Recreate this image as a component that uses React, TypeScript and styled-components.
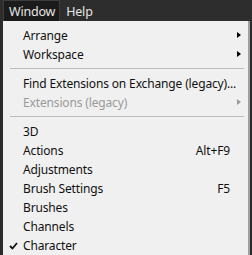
import React from "react";
import styled, { createGlobalStyle } from "styled-components";

const GlobalStyle = createGlobalStyle`
  html, body {
    margin: 0;
    padding: 0;
    background: #2b2b2b;
  }
  body {
    font-family: "Noto Sans", "Open Sans", sans-serif;
    font-size: 12px;
    width: 252px;
    height: 255px;
    overflow: hidden;
  }
`;

const Screen = styled.div`
  width: 252px;
  height: 255px;
  background: #2b2b2b;
  display: flex;
  flex-direction: column;
`;

const MenuBar = styled.div`
  height: 22px;
  display: flex;
  align-items: stretch;
  padding-left: 3px;
  background: #2d2d2d;
`;

const BarItem = styled.div<{ $open?: boolean }>`
  display: flex;
  align-items: center;
  padding: 0 4px 0 5px;
  color: #e6e6e6;
  font-size: 12.5px;
  letter-spacing: -0.2px;
  background: ${(p) => (p.$open ? "#1b1b1b" : "transparent")};
  border: 1px solid ${(p) => (p.$open ? "#3c3c3c" : "transparent")};
  border-bottom: none;
`;

const Dropdown = styled.div`
  margin: 0 2px 0 3px;
  flex: 1;
  background: #f0f0f0;
  border-right: 2px solid #a0a0a0;
  padding-top: 5px;
  display: flex;
  flex-direction: column;
`;

const Item = styled.div<{ $disabled?: boolean }>`
  position: relative;
  height: 19px;
  display: flex;
  align-items: center;
  padding: 0 18px 0 20px;
  letter-spacing: -0.15px;
  color: ${(p) => (p.$disabled ? "#9a9a9a" : "#111")};
`;

const Label = styled.span`
  flex: 1;
  white-space: nowrap;
`;

const Shortcut = styled.span`
  margin-right: 0;
`;

const Arrow = styled.span<{ $dim?: boolean }>`
  position: absolute;
  right: 7px;
  top: 6px;
  width: 0;
  height: 0;
  border-top: 3.5px solid transparent;
  border-bottom: 3.5px solid transparent;
  border-left: 4px solid ${(p) => (p.$dim ? "#9a9a9a" : "#000")};
`;

const Check = styled.svg`
  position: absolute;
  left: 6px;
  top: 6px;
`;

const Separator = styled.div`
  height: 1px;
  margin: 4px 4px 5px 7px;
  background: #bcbcbc;
`;

export default function App() {
  return (
    <Screen>
      <GlobalStyle />
      <MenuBar>
        <BarItem $open>Window</BarItem>
        <BarItem>Help</BarItem>
      </MenuBar>
      <Dropdown>
        <Item>
          <Label>Arrange</Label>
          <Arrow />
        </Item>
        <Item>
          <Label>Workspace</Label>
          <Arrow />
        </Item>
        <Separator />
        <Item>
          <Label>Find Extensions on Exchange (legacy)...</Label>
        </Item>
        <Item $disabled>
          <Label>Extensions (legacy)</Label>
          <Arrow $dim />
        </Item>
        <Separator />
        <Item>
          <Label>3D</Label>
        </Item>
        <Item>
          <Label>Actions</Label>
          <Shortcut>Alt+F9</Shortcut>
        </Item>
        <Item>
          <Label>Adjustments</Label>
        </Item>
        <Item>
          <Label>Brush Settings</Label>
          <Shortcut>F5</Shortcut>
        </Item>
        <Item>
          <Label>Brushes</Label>
        </Item>
        <Item>
          <Label>Channels</Label>
        </Item>
        <Item>
          <Check width="9" height="8" viewBox="0 0 9 8">
            <path d="M1 4 L3.5 6.5 L8 1" stroke="#111" strokeWidth="1.8" fill="none" />
          </Check>
          <Label>Character</Label>
        </Item>
      </Dropdown>
    </Screen>
  );
}
